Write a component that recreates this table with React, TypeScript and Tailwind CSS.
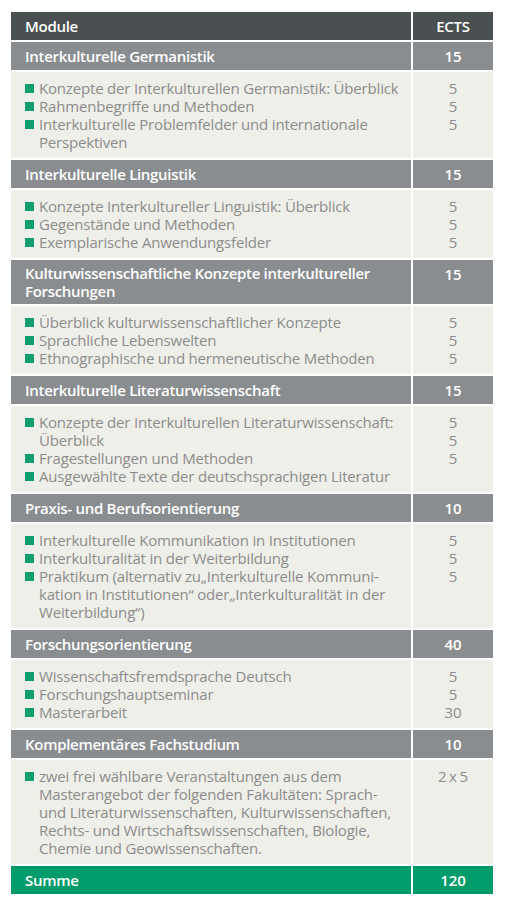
import React from "react";

interface Section {
  title: string[];
  ects: string;
  items: string[][];
  points: string[];
}

const sections: Section[] = [
  {
    title: ["Interkulturelle Germanistik"],
    ects: "15",
    items: [
      ["Konzepte der Interkulturellen Germanistik: Überblick"],
      ["Rahmenbegriffe und Methoden"],
      ["Interkulturelle Problemfelder und internationale", "Perspektiven"],
    ],
    points: ["5", "5", "5"],
  },
  {
    title: ["Interkulturelle Linguistik"],
    ects: "15",
    items: [
      ["Konzepte Interkultureller Linguistik: Überblick"],
      ["Gegenstände und Methoden"],
      ["Exemplarische Anwendungsfelder"],
    ],
    points: ["5", "5", "5"],
  },
  {
    title: ["Kulturwissenschaftliche Konzepte interkultureller", "Forschungen"],
    ects: "15",
    items: [
      ["Überblick kulturwissenschaftlicher Konzepte"],
      ["Sprachliche Lebenswelten"],
      ["Ethnographische und hermeneutische Methoden"],
    ],
    points: ["5", "5", "5"],
  },
  {
    title: ["Interkulturelle Literaturwissenschaft"],
    ects: "15",
    items: [
      ["Konzepte der Interkulturellen Literaturwissenschaft:", "Überblick"],
      ["Fragestellungen und Methoden"],
      ["Ausgewählte Texte der deutschsprachigen Literatur"],
    ],
    points: ["5", "5", "5"],
  },
  {
    title: ["Praxis- und Berufsorientierung"],
    ects: "10",
    items: [
      ["Interkulturelle Kommunikation in Institutionen"],
      ["Interkulturalität in der Weiterbildung"],
      [
        "Praktikum (alternativ zu\u201EInterkulturelle Kommuni-",
        "kation in Institutionen\u201C oder\u201EInterkulturalität in der",
        "Weiterbildung\u201C)",
      ],
    ],
    points: ["5", "5", "5"],
  },
  {
    title: ["Forschungsorientierung"],
    ects: "40",
    items: [["Wissenschaftsfremdsprache Deutsch"], ["Forschungshauptseminar"], ["Masterarbeit"]],
    points: ["5", "5", "30"],
  },
  {
    title: ["Komplementäres Fachstudium"],
    ects: "10",
    items: [
      [
        "zwei frei wählbare Veranstaltungen aus dem",
        "Masterangebot der folgenden Fakultäten: Sprach-",
        "und Literaturwissenschaften, Kulturwissenschaften,",
        "Rechts- und Wirtschaftswissenschaften, Biologie,",
        "Chemie und Geowissenschaften.",
      ],
    ],
    points: ["2\u2009x\u20095"],
  },
];

export default function App() {
  return (
    <div
      className="min-h-screen bg-white pt-[12px] pl-[11px]"
      style={{ fontFamily: '"Open Sans", "Noto Sans", sans-serif' }}
    >
      <div className="grid w-[482px] grid-cols-[400px_80px] gap-[2px] text-[15px]">
        <div className="flex h-[28px] items-center bg-[#4a4f52] px-[14px] font-semibold tracking-[-0.02em] text-white">
          Module
        </div>
        <div className="flex h-[28px] items-center justify-center bg-[#4a4f52] font-semibold tracking-[-0.02em] text-white">
          ECTS
        </div>

        {sections.map((s) => (
          <React.Fragment key={s.title.join(" ")}>
            <div className="flex min-h-[28px] flex-col justify-center bg-[#8a8d90] px-[14px] py-[4px] font-semibold leading-[18px] tracking-[-0.02em] text-white">
              {s.title.map((t) => (
                <span key={t} className="whitespace-nowrap">{t}</span>
              ))}
            </div>
            <div className="flex items-start justify-center bg-[#8a8d90] pt-[5px] font-semibold leading-[18px] text-white">
              {s.ects}
            </div>

            <div className="bg-[#efefea] px-[14px] py-[7px] leading-[18px] tracking-[-0.012em] text-[#8c8c8c]">
              {s.items.map((lines) => (
                <div key={lines[0]} className="flex">
                  <span className="mt-[5px] mr-[5px] h-[9px] w-[9px] shrink-0 bg-[#0f9f6e]" />
                  <div className="flex flex-col">
                    {lines.map((l) => (
                      <span key={l} className="whitespace-nowrap">{l}</span>
                    ))}
                  </div>
                </div>
              ))}
            </div>
            <div className="flex flex-col items-center bg-[#efefea] py-[7px] leading-[18px] text-[#8c8c8c]">
              {s.points.map((p, i) => (
                <span key={i}>{p}</span>
              ))}
            </div>
          </React.Fragment>
        ))}

        <div className="flex h-[28px] items-center bg-[#009c6b] px-[14px] font-semibold tracking-[-0.02em] text-white">
          Summe
        </div>
        <div className="flex h-[28px] items-center justify-center bg-[#009c6b] font-semibold text-white">120</div>
      </div>
    </div>
  );
}
